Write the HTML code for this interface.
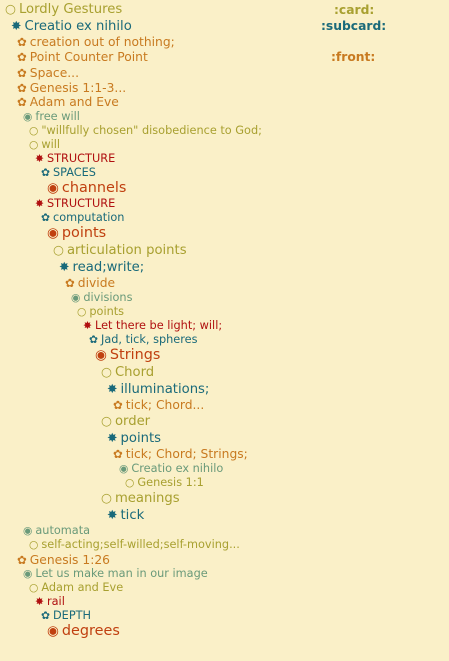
<!DOCTYPE html>
<html><head><meta charset="utf-8"><style>
html,body{margin:0;padding:0}
body{width:449px;height:661px;background:#faf0c8;position:relative;overflow:hidden;font-family:"DejaVu Sans","Liberation Sans",sans-serif}
div{position:absolute;white-space:nowrap;height:16px;line-height:18px}
.b{font-size:0.95em;margin-right:3px}
.o{color:#a8a030}.t{color:#1a6a7a}.f{color:#c87a20}.g{color:#6a9a7a}.r{color:#b01010}.c{color:#c04010}
.s11{font-size:11.3px}.s12{font-size:12.3px}.s13{font-size:13.2px}.s14{font-size:14.4px}
.tag{font-weight:bold;font-size:12.3px}
</style></head><body>
<div class="o s13" style="left:5px;top:0px"><span class="b">○</span>Lordly Gestures</div>
<div class="o tag" style="left:334px;top:1px">:card:</div>
<div class="t s13" style="left:11px;top:17px"><span class="b">✸</span>Creatio ex nihilo</div>
<div class="t tag" style="left:321px;top:17px">:subcard:</div>
<div class="f s12" style="left:17px;top:33px"><span class="b">✿</span>creation out of nothing;</div>
<div class="f s12" style="left:17px;top:48px"><span class="b">✿</span>Point Counter Point</div>
<div class="f tag" style="left:331px;top:48px">:front:</div>
<div class="f s12" style="left:17px;top:64px"><span class="b">✿</span>Space...</div>
<div class="f s12" style="left:17px;top:79px"><span class="b">✿</span>Genesis 1:1-3...</div>
<div class="f s12" style="left:17px;top:93px"><span class="b">✿</span>Adam and Eve</div>
<div class="g s11" style="left:23px;top:108px"><span class="b">◉</span>free will</div>
<div class="o s11" style="left:29px;top:122px"><span class="b">○</span>"willfully chosen" disobedience to God;</div>
<div class="o s11" style="left:29px;top:136px"><span class="b">○</span>will</div>
<div class="r s11" style="left:35px;top:150px"><span class="b">✸</span>STRUCTURE</div>
<div class="t s11" style="left:41px;top:164px"><span class="b">✿</span>SPACES</div>
<div class="c s14" style="left:47px;top:179px"><span class="b">◉</span>channels</div>
<div class="r s11" style="left:35px;top:195px"><span class="b">✸</span>STRUCTURE</div>
<div class="t s11" style="left:41px;top:209px"><span class="b">✿</span>computation</div>
<div class="c s14" style="left:47px;top:224px"><span class="b">◉</span>points</div>
<div class="o s13" style="left:53px;top:241px"><span class="b">○</span>articulation points</div>
<div class="t s13" style="left:59px;top:258px"><span class="b">✸</span>read;write;</div>
<div class="f s12" style="left:65px;top:274px"><span class="b">✿</span>divide</div>
<div class="g s11" style="left:71px;top:289px"><span class="b">◉</span>divisions</div>
<div class="o s11" style="left:77px;top:303px"><span class="b">○</span>points</div>
<div class="r s11" style="left:83px;top:317px"><span class="b">✸</span>Let there be light; will;</div>
<div class="t s11" style="left:89px;top:331px"><span class="b">✿</span>Jad, tick, spheres</div>
<div class="c s14" style="left:95px;top:346px"><span class="b">◉</span>Strings</div>
<div class="o s13" style="left:101px;top:363px"><span class="b">○</span>Chord</div>
<div class="t s13" style="left:107px;top:380px"><span class="b">✸</span>illuminations;</div>
<div class="f s12" style="left:113px;top:396px"><span class="b">✿</span>tick; Chord...</div>
<div class="o s13" style="left:101px;top:412px"><span class="b">○</span>order</div>
<div class="t s13" style="left:107px;top:429px"><span class="b">✸</span>points</div>
<div class="f s12" style="left:113px;top:445px"><span class="b">✿</span>tick; Chord; Strings;</div>
<div class="g s11" style="left:119px;top:460px"><span class="b">◉</span>Creatio ex nihilo</div>
<div class="o s11" style="left:125px;top:474px"><span class="b">○</span>Genesis 1:1</div>
<div class="o s13" style="left:101px;top:489px"><span class="b">○</span>meanings</div>
<div class="t s13" style="left:107px;top:506px"><span class="b">✸</span>tick</div>
<div class="g s11" style="left:23px;top:522px"><span class="b">◉</span>automata</div>
<div class="o s11" style="left:29px;top:536px"><span class="b">○</span>self-acting;self-willed;self-moving...</div>
<div class="f s12" style="left:17px;top:551px"><span class="b">✿</span>Genesis 1:26</div>
<div class="g s11" style="left:23px;top:565px"><span class="b">◉</span>Let us make man in our image</div>
<div class="o s11" style="left:29px;top:579px"><span class="b">○</span>Adam and Eve</div>
<div class="r s11" style="left:35px;top:593px"><span class="b">✸</span>rail</div>
<div class="t s11" style="left:41px;top:607px"><span class="b">✿</span>DEPTH</div>
<div class="c s14" style="left:47px;top:622px"><span class="b">◉</span>degrees</div>
</body></html>
